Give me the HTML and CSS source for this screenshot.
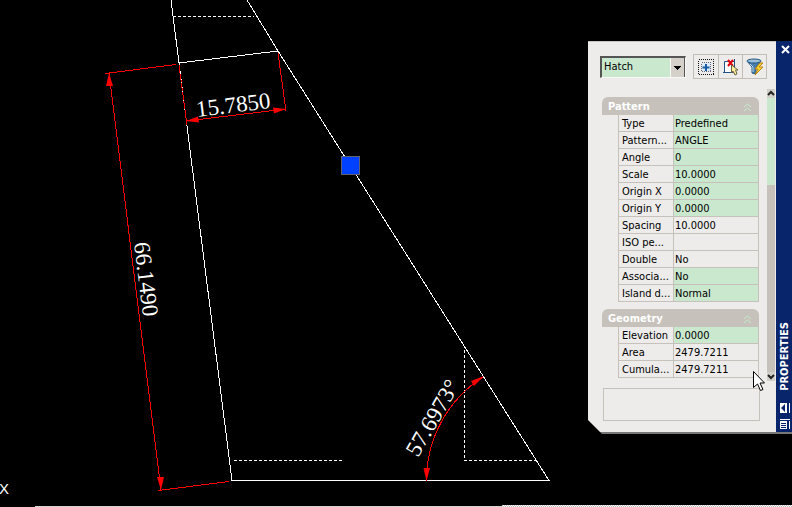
FILE: index.html
```html
<!DOCTYPE html>
<html lang="en">
<head>
<meta charset="utf-8">
<title>Drawing</title>
<link rel="stylesheet" href="styles.css">
</head>
<body>
<main class="workspace">
  <svg class="drawing" role="img" aria-label="Dimensioned section">
    <g class="outline">
      <path d="M171 0L179 63L232 480.500H549L278 51L247 0M179 63L278 51"/>
      <path class="dashed" d="M173 16.500H254M234 460.500H344M464.500 350V460.500H536"/>
    </g>
    <g class="dimension">
      <path d="M105 73.500L176 64.500M109 73L161 490M158 490.500L229 481.500"/>
      <path d="M278 53L286 111M186 121L286 109"/>
      <path class="overlap" d="M179 65L187 125"/>
      <path d="M426.500 481A123 123 0 0 1 483 377"/>
    </g>
    <g class="arrow">
      <path d="M109 73L106 86H113Z"/>
      <path d="M161 490L157 477H164Z"/>
      <path d="M186 121L198 116.500L199 122.500Z"/>
      <path d="M286 109L273 107.500L274 113.500Z"/>
      <path d="M426.500 481L423.500 468H430Z"/>
      <path d="M484 376L471 381L474 386Z"/>
    </g>
    <g class="measure">
      <text transform="translate(197 117) rotate(-7)">15.7850</text>
      <text transform="translate(134 243) rotate(83)">66.1490</text>
      <text transform="translate(418 458) rotate(-60)">57.6973°</text>
    </g>
    <text class="axis" x="-1" y="494">X</text>
    <rect class="grip" x="341.500" y="156.500" width="18" height="18"/>
  </svg>

  <aside class="palette" aria-label="Properties">
    <div class="palette-body">
      <div class="toolbar">
        <select class="object-type" aria-label="Object type"><option>Hatch</option></select>
        <div class="tools">
          <button type="button" aria-label="Toggle PICKADD">
            <svg width="18" height="18" viewBox="0 0 18 18"><g shape-rendering="crispEdges"><rect x="1.500" y="1.500" width="15" height="15" fill="none" stroke="#111" stroke-dasharray="1 1"/><rect x="4.500" y="4.500" width="9" height="9" fill="#dcebf5" stroke="#667" stroke-dasharray="1 1"/></g><path d="M9 6V13M5.500 9.500H12.500" stroke="#175ca5" stroke-width="2"/></svg>
          </button>
          <button type="button" aria-label="Select objects">
            <svg width="18" height="18" viewBox="0 0 18 18"><path d="M2.500 3.500H12.500V14.500H2.500ZM12.500 1V16M1 14.500H15" fill="#fff" stroke="#235386"/><path d="M6 2L11 8M11 2L6 8" stroke="#e00010" stroke-width="2"/><path d="M9.500 7V15L11 13L13 17L15 16L13.500 12H16Z" fill="#fff0a0" stroke="#6c6440"/></svg>
          </button>
          <button type="button" aria-label="Quick select">
            <svg width="18" height="18" viewBox="0 0 18 18"><path d="M1 3L6 9V15L10 16V9L15 3Z" fill="#497eae" stroke="#28577e"/><ellipse cx="8" cy="3" rx="7" ry="2" fill="#9bc0db" stroke="#28577e"/><path d="M4 6L7 9V14" fill="none" stroke="#b9d8eb"/><path d="M14 5L9 11H12L9 17L17 9H13L17 5Z" fill="#ffd62f" stroke="#bc8410"/></svg>
          </button>
        </div>
      </div>

      <div class="scroller">
        <div class="groups">
          <section>
            <h2><button class="group-head" type="button">Pattern
              <svg width="9" height="9" viewBox="0 0 9 9"><path d="M1 4L4.500 1L8 4M1 8L4.500 5L8 8"/></svg></button></h2>
            <table class="props">
              <tr><th scope="row">Type</th><td class="edit">Predefined</td></tr>
              <tr><th scope="row">Pattern...</th><td class="edit">ANGLE</td></tr>
              <tr><th scope="row">Angle</th><td class="edit">0</td></tr>
              <tr><th scope="row">Scale</th><td class="edit">10.0000</td></tr>
              <tr><th scope="row">Origin X</th><td class="edit">0.0000</td></tr>
              <tr><th scope="row">Origin Y</th><td class="edit">0.0000</td></tr>
              <tr><th scope="row">Spacing</th><td>10.0000</td></tr>
              <tr><th scope="row">ISO pe...</th><td></td></tr>
              <tr><th scope="row">Double</th><td>No</td></tr>
              <tr><th scope="row">Associa...</th><td class="edit">No</td></tr>
              <tr><th scope="row">Island d...</th><td class="edit">Normal</td></tr>
            </table>
          </section>
          <section>
            <h2><button class="group-head" type="button">Geometry
              <svg width="9" height="9" viewBox="0 0 9 9"><path d="M1 4L4.500 1L8 4M1 8L4.500 5L8 8"/></svg></button></h2>
            <table class="props">
              <tr><th scope="row">Elevation</th><td class="edit">0.0000</td></tr>
              <tr><th scope="row">Area</th><td>2479.7211</td></tr>
              <tr><th scope="row">Cumula...</th><td>2479.7211</td></tr>
            </table>
          </section>
        </div>
        <div class="scrollbar">
          <button type="button" aria-label="Scroll up"><svg width="8" height="9" viewBox="0 0 8 9"><path d="M1 6L4 3L7 6" /></svg></button>
          <div class="track"></div>
          <div class="thumb"></div>
          <button type="button" aria-label="Scroll down"><svg width="8" height="9" viewBox="0 0 8 9"><path d="M1 3L4 6L7 3"/></svg></button>
        </div>
      </div>
      <div class="description"></div>
    </div>
    <div class="titlebar">
      <button type="button" aria-label="Close"><svg width="10" height="10" viewBox="0 0 10 10"><path d="M2 1L9 8M9 1L2 8" stroke="#fff" stroke-width="2"/></svg></button>
      <span class="title">PROPERTIES</span>
      <button type="button" aria-label="Auto-hide"><svg width="10" height="10" viewBox="0 0 10 10"><path d="M0 0H7V10H0ZM9 0H10V10H9Z" fill="#fff"/><path d="M1 5L5 1V9Z" fill="#08246b"/></svg></button>
      <button type="button" aria-label="Palette menu"><svg width="10" height="10" viewBox="0 0 10 10"><path d="M0 0H10V1H0ZM0 2H7V10H0ZM9 2H10V10H9Z" fill="#fff"/><path d="M1 4.500H6M1 6.500H6M1 8.500H6" stroke="#08246b"/></svg></button>
    </div>
  </aside>

  <svg class="cursor" width="12" height="21" viewBox="0 0 12 21" aria-hidden="true"><path d="M.500 .500V16.500L4.500 13L7.500 19.500L10 18.500L7 12H11.500Z" fill="#fff" stroke="#000"/></svg>

  <div class="edge"><span class="edge-line"></span><span class="edge-dither"></span></div>
</main>
</body>
</html>
```

FILE: styles.css
```css
* { box-sizing: border-box; }

body {
  margin: 0;
  background: #000;
  color: #000;
  font: 11px/16px "DejaVu Sans Condensed", "DejaVu Sans", sans-serif;
}

button {
  padding: 0;
  border: 0;
  background: none;
  font: inherit;
}

svg { display: block; }

.workspace {
  position: relative;
  min-height: 100vh;
  overflow: hidden;
}

/* Drawing canvas */
.drawing {
  position: absolute;
  inset: 0;
  width: 100%;
  height: 100%;
}

.outline { fill: none; stroke: #fff; shape-rendering: crispEdges; }
.dashed { stroke-dasharray: 3 2; }
.dimension { fill: none; stroke: #f00; shape-rendering: crispEdges; }
.overlap { stroke-dasharray: 8 1; }
.arrow { fill: #f00; }
.measure { fill: #fff; font: 23px "Liberation Serif", serif; }
.axis { fill: #fff; font: 15px "Liberation Sans", sans-serif; }
.grip { fill: #0040ff; stroke: #606070; }

/* Floating palette */
.palette {
  position: absolute;
  top: 41px;
  right: 0;
  display: flex;
  width: 204px;
  border-bottom: 2px solid #777;
  clip-path: polygon(0 0, 100% 0, 100% 100%, 14px 100%, 0 379px);
}

.palette-body {
  flex: 1;
  padding: 12px 1px 11px 12px;
  border-top: 1px solid #c8c5c0;
  background: #edecea;
}

.toolbar {
  display: flex;
  align-items: center;
  justify-content: space-between;
  padding-right: 8px;
}

.object-type {
  appearance: none;
  width: 86px;
  height: 22px;
  padding: 0 2px;
  border: 1px solid #f8f8f6;
  border-top: 2px solid #555;
  border-left: 2px solid #555;
  border-radius: 0;
  background:
    linear-gradient(#000, #000) right 4px top 8px / 7px 1px no-repeat,
    linear-gradient(#000, #000) right 5px top 9px / 5px 1px no-repeat,
    linear-gradient(#000, #000) right 6px top 10px / 3px 1px no-repeat,
    linear-gradient(#000, #000) right 7px top 11px / 1px 1px no-repeat,
    linear-gradient(90deg, #f8f8f6 1px, #d5d1ca 1px 14px, #555 14px) right / 15px 100% no-repeat,
    #cae8ce;
  color: #000;
  font: inherit;
}

.tools {
  display: flex;
  border: 1px solid #c2beb7;
}

.tools button {
  display: grid;
  place-items: center;
  width: 24px;
  height: 23px;
}

.tools button + button { border-left: 1px solid #c2beb7; }

.scroller {
  display: flex;
  justify-content: space-between;
  margin-top: 10px;
  padding-left: 2px;
}

.groups {
  display: grid;
  gap: 7px;
  width: 157px;
  padding: 8px 0 3px;
}

h2 { margin: 0; font-size: 11px; }

.group-head {
  display: flex;
  align-items: center;
  justify-content: space-between;
  width: 100%;
  height: 18px;
  padding: 2px 7px 0 6px;
  border-radius: 6px 6px 0 0;
  background: #c6c2bb;
  color: #fff;
  font-weight: bold;
}

.group-head svg { fill: none; stroke: #c4ebcb; }

.props {
  width: 141px;
  margin-left: 16px;
  border-left: 1px solid #c6c2bb;
  border-spacing: 0;
  table-layout: fixed;
}

.props th,
.props td {
  height: 17px;
  padding: 2px 0 0 3px;
  border-right: 1px solid #c6c2bb;
  border-bottom: 1px solid #c6c2bb;
  font-weight: normal;
  line-height: 14px;
  text-align: left;
  white-space: nowrap;
}

.props th { width: 55px; }
.props td { padding-left: 1px; }
.props .edit { background: #cae8ce; }

.scrollbar {
  display: grid;
  grid-template-rows: 9px 87fr 187fr 9px;
  width: 8px;
}

.scrollbar button { background: #d2cfc9; }
.scrollbar path { fill: none; stroke: #222; stroke-width: 2; }
.track { background: #cae8ce; }
.thumb { background: #c6c2bb; }

.description {
  height: 33px;
  margin: 7px 15px 0 3px;
  border: 1px solid #c6c2bb;
}

.titlebar {
  display: flex;
  flex-direction: column;
  align-items: center;
  gap: 6px;
  width: 16px;
  padding: 4px 0 3px 2px;
  background: #08246b;
}

.title {
  margin: auto 0 6px;
  color: #fff;
  font-weight: bold;
  line-height: 14px;
  writing-mode: vertical-rl;
  transform: rotate(180deg);
}

.cursor {
  position: absolute;
  top: 371px;
  right: 27px;
}

/* Window edge beneath the canvas */
.edge {
  position: absolute;
  right: 0;
  bottom: 0;
  left: 35px;
  display: flex;
  align-items: flex-end;
}

.edge-line {
  flex: 467;
  height: 1px;
  background: #d5d1ca;
}

.edge-dither {
  flex: 290;
  height: 2px;
  background: repeating-conic-gradient(#fff 0 25%, #c6bfbf 0 50%) 0 0 / 2px 2px;
}
```
